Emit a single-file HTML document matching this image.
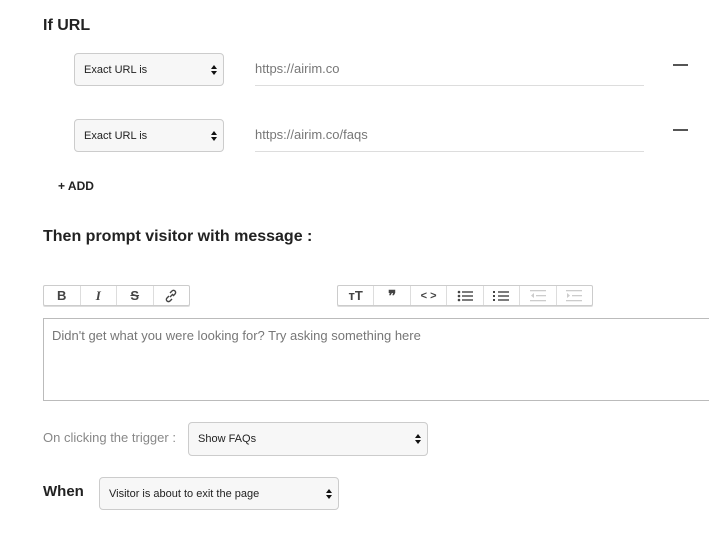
<!DOCTYPE html><html><head><style>
body{margin:0;width:709px;height:549px;background:#fff;font-family:"Liberation Sans",Arial,sans-serif;position:relative;overflow:hidden;color:#222}
.a{position:absolute}
.sel{position:absolute;box-sizing:border-box;border:1px solid #ccc;border-radius:4px;background:#f7f7f7;font-size:11px;color:#222;padding-left:9px;display:flex;align-items:center}
.sel:after{content:"";position:absolute;right:6px;top:50%;margin-top:-5px;width:0;height:0;border-left:3px solid transparent;border-right:3px solid transparent;border-bottom:4px solid #111;}
.sel:before{content:"";position:absolute;right:6px;top:50%;margin-top:1px;width:0;height:0;border-left:3px solid transparent;border-right:3px solid transparent;border-top:4px solid #111;}
.inp{position:absolute;left:255px;width:389px;border-bottom:1px solid #ddd;font-size:13px;color:#777;height:32px;line-height:32px}
.minus{position:absolute;left:673px;width:15px;height:1.5px;background:#555}
.tb{position:absolute;top:285px;height:21px;box-sizing:border-box;border:1px solid #ccc;border-radius:2px;display:flex;box-shadow:0 1px 0 #ddd}
.tb div{flex:1;border-right:1px solid #ddd;display:flex;align-items:center;justify-content:center;font-size:13px;font-weight:bold;color:#444}
.tb div:last-child{border-right:none}
</style></head><body>
<div class="a" style="left:43px;top:17px;font-size:16px;font-weight:bold">If URL</div>
<div class="sel" style="left:74px;top:53px;width:150px;height:33px">Exact URL is</div>
<div class="inp" style="top:53px">https://airim.co</div>
<div class="minus" style="top:64px"></div>
<div class="sel" style="left:74px;top:119px;width:150px;height:33px">Exact URL is</div>
<div class="inp" style="top:119px">https://airim.co/faqs</div>
<div class="minus" style="top:129px"></div>
<div class="a" style="left:58px;top:179px;font-size:12px;font-weight:bold">+ ADD</div>
<div class="a" style="left:43px;top:228px;font-size:16px;font-weight:bold">Then prompt visitor with message :</div>
<div class="tb" style="left:43px;width:147px">
<div>B</div><div style="font-style:italic;font-family:'Liberation Serif'">I</div><div style="text-decoration:line-through">S</div>
<div><svg width="14" height="14" viewBox="0 0 14 14"><path d="M6 8l3-3M5 7L3 9a2 2 0 003 3l2-2M9 7l2-2a2 2 0 00-3-3L6 4" stroke="#444" stroke-width="1.4" fill="none"/></svg></div></div>
<div class="tb" style="left:337px;width:256px">
<div>тT</div><div style="font-size:15px">❞</div><div style="font-size:11px">&lt; &gt;</div>
<div><svg width="16" height="12"><g fill="#444"><circle cx="2" cy="2" r="1.3"/><circle cx="2" cy="6" r="1.3"/><circle cx="2" cy="10" r="1.3"/><rect x="5" y="1.3" width="11" height="1.4"/><rect x="5" y="5.3" width="11" height="1.4"/><rect x="5" y="9.3" width="11" height="1.4"/></g></svg></div>
<div><svg width="16" height="12"><g fill="#444"><rect x="5" y="1.3" width="11" height="1.4"/><rect x="5" y="5.3" width="11" height="1.4"/><rect x="5" y="9.3" width="11" height="1.4"/><rect x="0" y="1" width="2" height="2"/><rect x="0" y="5" width="2" height="2"/><rect x="0" y="9" width="2" height="2"/></g></svg></div>
<div><svg width="16" height="12"><g fill="#ccc"><rect x="0" y="0" width="16" height="1.3"/><rect x="6" y="5" width="10" height="1.3"/><rect x="0" y="10" width="16" height="1.3"/><path d="M4 3L1 5.6 4 8z"/></g></svg></div>
<div><svg width="16" height="12"><g fill="#ccc"><rect x="0" y="0" width="16" height="1.3"/><rect x="6" y="5" width="10" height="1.3"/><rect x="0" y="10" width="16" height="1.3"/><path d="M1 3L4 5.6 1 8z"/></g></svg></div>
</div>
<div class="a" style="left:43px;top:318px;width:700px;height:83px;box-sizing:border-box;border:1px solid #bbb;font-size:13px;color:#777;padding:9px 8px">Didn't get what you were looking for? Try asking something here</div>
<div class="a" style="left:43px;top:430px;font-size:13px;color:#888">On clicking the trigger :</div>
<div class="sel" style="left:188px;top:422px;width:240px;height:34px">Show FAQs</div>
<div class="a" style="left:43px;top:483px;font-size:15px;font-weight:bold">When</div>
<div class="sel" style="left:99px;top:477px;width:240px;height:33px">Visitor is about to exit the page</div>
</body></html>
